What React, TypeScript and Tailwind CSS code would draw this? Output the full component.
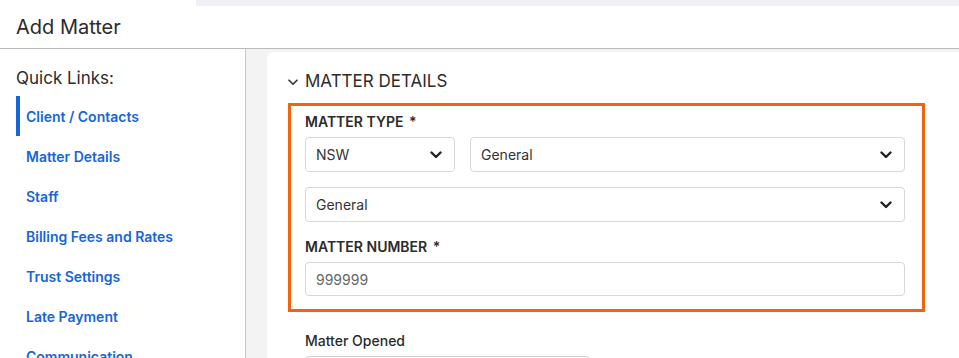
const links = [
  "Client / Contacts",
  "Matter Details",
  "Staff",
  "Billing Fees and Rates",
  "Trust Settings",
  "Late Payment",
  "Communication",
];

function SelectBox({ value, className }: { value: string; className?: string }) {
  return (
    <div
      className={`flex h-[35px] items-center justify-between rounded-[4px] border border-[#d7d7d7] bg-white pl-[10px] pr-[12px] text-[14px] text-[#333] ${className ?? ""}`}
    >
      <span>{value}</span>
      <svg width="12" height="8" viewBox="0 0 12 8" fill="none">
        <path d="M1.5 1.5L6 6L10.5 1.5" stroke="#222" strokeWidth="2.4" strokeLinecap="round" strokeLinejoin="round" />
      </svg>
    </div>
  );
}

export default function App() {
  return (
    <div className="h-[358px] w-[959px] overflow-hidden bg-white font-['Inter',sans-serif] text-[#2b2b2b]">
      <div className="ml-[196px] h-[6px] bg-[#efeff4]" />
      <div className="flex h-[43px] items-center border-b border-[#bababa] px-4">
        <h1 className="text-[20px] leading-6">Add Matter</h1>
      </div>

      <div className="flex">
        <aside className="h-[320px] w-[246px] shrink-0 border-r border-[#c9c9c9] pt-[17px]">
          <p className="pl-4 text-[17px] leading-6 text-[#2b2b2b]">Quick Links:</p>
          <ul className="mt-[6px]">
            {links.map((l, i) => (
              <li
                key={l}
                className={`ml-4 flex h-10 items-center border-l-4 pl-[6px] text-[14px] font-semibold text-[#1766d6] ${
                  i === 0 ? "border-[#1766d6]" : "border-transparent"
                }`}
              >
                {l}
              </li>
            ))}
          </ul>
        </aside>

        <main className="flex-1 bg-[#f3f3f3] pl-[21px] pt-[3px]">
          <div className="h-[320px] rounded-tl-[6px] bg-white pl-[21px] pt-[18px]">
            <div className="flex h-6 items-center gap-[7px]">
              <svg width="10" height="7" viewBox="0 0 10 7" fill="none">
                <path d="M1 1.2L5 5.2L9 1.2" stroke="#333" strokeWidth="1.6" strokeLinecap="round" strokeLinejoin="round" />
              </svg>
              <h2 className="text-[17px] text-[#2b2b2b]">MATTER DETAILS</h2>
            </div>

            <div className="mt-[9px] w-[637px] border-[3px] border-[#f2620f] pb-[13px] pl-[14px] pr-[17px] pt-[6px]">
              <p className="text-[14px] font-semibold leading-5 text-[#2b2b2b]">
                MATTER TYPE <span className="ml-[2px]">*</span>
              </p>
              <div className="mt-[5px] flex gap-[15px]">
                <SelectBox value="NSW" className="w-[150px]" />
                <SelectBox value="General" className="flex-1" />
              </div>
              <SelectBox value="General" className="mt-[15px]" />

              <p className="mt-[15px] text-[14px] font-semibold leading-5 text-[#2b2b2b]">
                MATTER NUMBER <span className="ml-[2px]">*</span>
              </p>
              <div className="mt-[5px] flex h-[34px] items-center rounded-[4px] border border-[#d7d7d7] pl-[10px] text-[14px] text-[#666]">
                999999
              </div>
            </div>

            <p className="mt-[19px] pl-[17px] text-[14px] font-medium leading-5 text-[#2b2b2b]">Matter Opened</p>
            <div className="ml-[17px] mt-[5px] h-[34px] w-[285px] rounded-[4px] border border-[#d0d0d0]" />
          </div>
        </main>
      </div>
    </div>
  );
}
